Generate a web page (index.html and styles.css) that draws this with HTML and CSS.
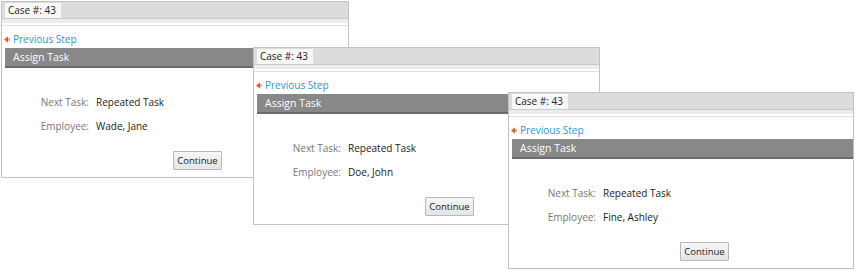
FILE: index.html
```html
<!DOCTYPE html>
<html>
<head>
<meta charset="utf-8">
<link rel="stylesheet" href="styles.css">
</head>
<body>
<div class="desk">
  <div class="win w1">
    <div class="tabbar"><span class="tab">Case #: 43</span></div>
    <div class="subbar"></div>
    <div class="rule"></div>
    <div class="prev"><svg class="ico" width="6" height="7" viewBox="0 0 6 7"><path d="M0 3.5L4 0.5V6.5Z" fill="#e05a35"/><path d="M3 1.5V5.5M5 2V5" stroke="#e05a35" stroke-width="1"/></svg><span class="link">Previous Step</span></div>
    <div class="head">Assign Task</div>
    <div class="form">
      <span class="lbl">Next Task:</span><span class="val">Repeated Task</span>
      <span class="lbl">Employee:</span><span class="val">Wade, Jane</span>
    </div>
    <div class="actions"><button class="btn">Continue</button></div>
  </div>
  <div class="win w2">
    <div class="tabbar"><span class="tab">Case #: 43</span></div>
    <div class="subbar"></div>
    <div class="rule"></div>
    <div class="prev"><svg class="ico" width="6" height="7" viewBox="0 0 6 7"><path d="M0 3.5L4 0.5V6.5Z" fill="#e05a35"/><path d="M3 1.5V5.5M5 2V5" stroke="#e05a35" stroke-width="1"/></svg><span class="link">Previous Step</span></div>
    <div class="head">Assign Task</div>
    <div class="form">
      <span class="lbl">Next Task:</span><span class="val">Repeated Task</span>
      <span class="lbl">Employee:</span><span class="val">Doe, John</span>
    </div>
    <div class="actions"><button class="btn">Continue</button></div>
  </div>
  <div class="win w3">
    <div class="tabbar"><span class="tab">Case #: 43</span></div>
    <div class="subbar"></div>
    <div class="rule"></div>
    <div class="prev"><svg class="ico" width="6" height="7" viewBox="0 0 6 7"><path d="M0 3.5L4 0.5V6.5Z" fill="#e05a35"/><path d="M3 1.5V5.5M5 2V5" stroke="#e05a35" stroke-width="1"/></svg><span class="link">Previous Step</span></div>
    <div class="head">Assign Task</div>
    <div class="form">
      <span class="lbl">Next Task:</span><span class="val">Repeated Task</span>
      <span class="lbl">Employee:</span><span class="val">Fine, Ashley</span>
    </div>
    <div class="actions"><button class="btn">Continue</button></div>
  </div>
</div>
</body>
</html>
```
FILE: styles.css
```css
* { box-sizing: border-box; }
html, body { margin: 0; padding: 0; background: #fff; }
body { font-family: "Open Sans", "Noto Sans", sans-serif; font-size: 10px; color: #222; }
.desk { position: relative; width: 857px; height: 272px; overflow: hidden; }
.win { position: absolute; background: #fff; border: 1px solid #c2c2c2; overflow: hidden; }
.w1 { left: 1px; top: 1px; width: 348px; height: 177px; }
.w2 { left: 253px; top: 47px; width: 347px; height: 178px; }
.w3 { left: 508px; top: 92px; width: 346px; height: 177px; }
.tabbar { height: 17px; background: #dcdcdc; border-bottom: 1px solid #c9c9c9; padding: 1px 0 0 3px; display: flex; }
.tab { background: #f8f8f8; padding: 0 5px 0 3px; height: 15px; line-height: 15px; font-size: 10px; color: #222; }
.subbar { height: 4px; background: #ececec; }
.rule { height: 1px; margin-top: 2px; background: #dedede; }
.prev { display: flex; align-items: center; gap: 3px; padding: 6px 0 0 2px; height: 20px; line-height: 14px; }
.ico { display: block; }
.link { color: #1e9ad6; font-size: 10px; }
.head { margin: 2px 0 0 3px; height: 20px; background: #888; border-bottom: 2px solid #6b6b6b; color: #fff; font-size: 10.5px; line-height: 18px; padding-left: 8px; }
.form { display: grid; grid-template-columns: 87px auto; column-gap: 7px; row-gap: 10px; margin-top: 27px; line-height: 14px; }
.lbl { text-align: right; color: #777; }
.val { color: #1a1a1a; }
.actions { margin-top: 18px; padding-left: 171px; display: flex; }
.btn { height: 19px; width: 49px; padding: 0; border: 1px solid #b8b8b8; border-radius: 1px; background: linear-gradient(#f7f7f7, #e4e4e4); font-family: "Open Sans", "Noto Sans", sans-serif; font-size: 9.5px; color: #1a1a1a; line-height: 16px; }
```
